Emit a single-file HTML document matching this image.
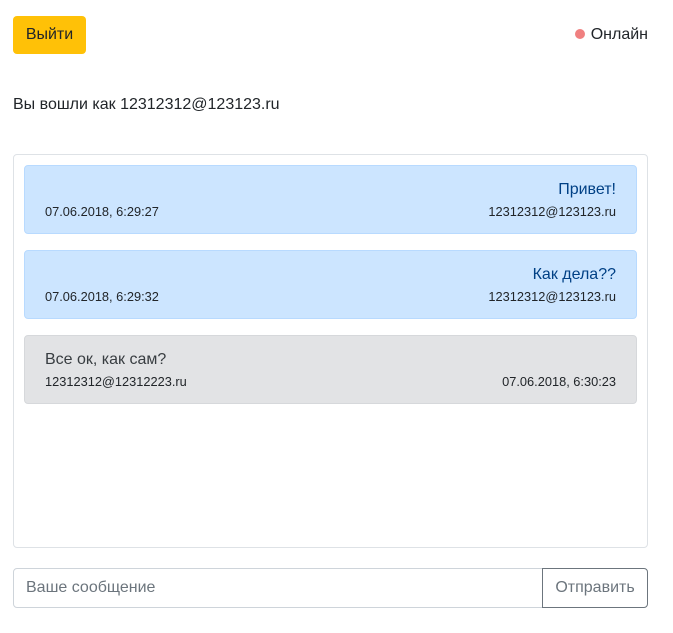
<!DOCTYPE html>
<html><head><meta charset="utf-8"><style>
*{box-sizing:border-box;margin:0;padding:0}
body{width:673px;height:633px;background:#fff;font-family:"Liberation Sans",sans-serif;color:#212529;position:relative;overflow:hidden}
.abs{position:absolute}
.btn{left:13px;top:16px;width:73px;height:38px;background:#ffc107;border-radius:4px;font-size:16px;line-height:38px;text-align:center;color:#212529}
.on{right:25px;top:25px;font-size:16px;line-height:19px}
.on:before{content:"";display:inline-block;width:10px;height:10px;border-radius:50%;background:#f08080;margin-right:6px;vertical-align:0}
.who{left:13px;top:95px;font-size:16px;line-height:20px}
.box{left:13px;top:154px;width:635px;height:394px;border:1px solid #dee2e6;border-radius:4px}
.m{position:absolute;left:10px;width:613px;height:69px;border-radius:4px;padding:0 20px}
.b{background:#cce5ff;border:1px solid #b8daff;color:#004085}
.g{background:#e2e3e5;border:1px solid #d6d8db;color:#383d41}
.t{font-size:16px;position:absolute;top:15px}
.s{font-size:12.8px;position:absolute;top:38px;color:#212529}
.in{left:13px;top:568px;width:530px;height:40px;border:1px solid #ced4da;border-radius:4px 0 0 4px;font-size:16px;color:#6c757d;padding-left:12px;line-height:38px}
.send{left:542px;top:568px;width:106px;height:40px;border:1px solid #6c757d;border-radius:0 4px 4px 0;font-size:16px;color:#6c757d;text-align:center;line-height:38px}
</style></head><body>
<div class="abs btn">Выйти</div>
<div class="abs on">Онлайн</div>
<div class="abs who">Вы вошли как 12312312@123123.ru</div>
<div class="abs box">
 <div class="m b" style="top:10px"><span class="t" style="right:20px">Привет!</span><span class="s" style="left:20px">07.06.2018, 6:29:27</span><span class="s" style="right:20px">12312312@123123.ru</span></div>
 <div class="m b" style="top:95px"><span class="t" style="right:20px">Как дела??</span><span class="s" style="left:20px">07.06.2018, 6:29:32</span><span class="s" style="right:20px">12312312@123123.ru</span></div>
 <div class="m g" style="top:180px"><span class="t" style="left:20px">Все ок, как сам?</span><span class="s" style="left:20px">12312312@12312223.ru</span><span class="s" style="right:20px">07.06.2018, 6:30:23</span></div>
</div>
<div class="abs in">Ваше сообщение</div>
<div class="abs send">Отправить</div>
</body></html>
